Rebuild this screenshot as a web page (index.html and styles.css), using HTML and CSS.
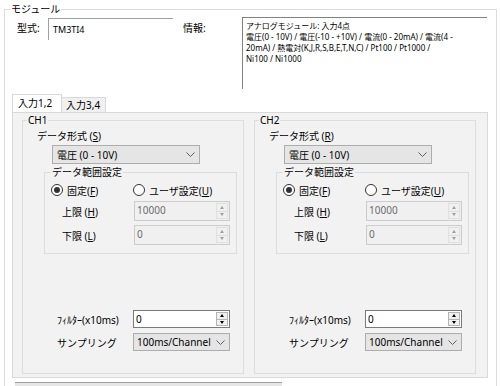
FILE: index.html
```html
<!DOCTYPE html>
<html>
<head>
<meta charset="utf-8">
<title>モジュール</title>
<link rel="stylesheet" href="styles.css">
</head>
<body>
<fieldset class="module">
    <legend>モジュール</legend>
    <div class="module-head">
        <span class="head-label type-label">型式:</span>
        <div class="type-box">TM3TI4</div>
        <span class="head-label info-label">情報:</span>
        <div class="info-box">アナログモジュール: 入力4点<br>電圧(0 - 10V) / 電圧(-10 - +10V) / 電流(0 - 20mA) / 電流(4 -<br>20mA) / 熱電対(K,J,R,S,B,E,T,N,C) / Pt100 / Pt1000 /<br>Ni100 / Ni1000</div>
    </div>

    <div class="tabs">
        <div class="tab active">入力1,2</div>
        <div class="tab">入力3,4</div>
    </div>

    <div class="tab-panel">
        <fieldset class="channel">
            <legend>CH1</legend>
            <div class="data-label">データ形式 (<u>S</u>)</div>
            <div class="combo wide">電圧 (0 - 10V)<svg class="chevron" width="9" height="5" viewBox="0 0 9 5"><polyline points="0.5,0.5 4.5,4.5 8.5,0.5" fill="none" stroke="#606060" stroke-width="1"/></svg></div>
            <fieldset class="range">
                <legend>データ範囲設定</legend>
                <div class="radio-row">
                    <span class="radio checked"></span><span class="radio-text fixed">固定(<u>F</u>)</span>
                    <span class="radio"></span><span class="radio-text">ユーザ設定(<u>U</u>)</span>
                </div>
                <div class="field-row">
                    <span class="field-label">上限 (<u>H</u>)</span>
                    <div class="spin disabled"><span class="spin-value">10000</span><span class="spin-btns"><i class="up"></i><i class="down"></i></span></div>
                </div>
                <div class="field-row">
                    <span class="field-label">下限 (<u>L</u>)</span>
                    <div class="spin disabled"><span class="spin-value">0</span><span class="spin-btns"><i class="up"></i><i class="down"></i></span></div>
                </div>
            </fieldset>
            <div class="bottom-row filter-row">
                <span class="bottom-label">ﾌｨﾙﾀｰ(x10ms)</span>
                <div class="spin"><span class="spin-value">0</span><span class="spin-btns"><i class="up"></i><i class="down"></i></span></div>
            </div>
            <div class="bottom-row">
                <span class="bottom-label">サンプリング</span>
                <div class="combo small">100ms/Channel<svg class="chevron" width="9" height="5" viewBox="0 0 9 5"><polyline points="0.5,0.5 4.5,4.5 8.5,0.5" fill="none" stroke="#606060" stroke-width="1"/></svg></div>
            </div>
        </fieldset>

        <fieldset class="channel">
            <legend>CH2</legend>
            <div class="data-label">データ形式 (<u>R</u>)</div>
            <div class="combo wide">電圧 (0 - 10V)<svg class="chevron" width="9" height="5" viewBox="0 0 9 5"><polyline points="0.5,0.5 4.5,4.5 8.5,0.5" fill="none" stroke="#606060" stroke-width="1"/></svg></div>
            <fieldset class="range">
                <legend>データ範囲設定</legend>
                <div class="radio-row">
                    <span class="radio checked"></span><span class="radio-text fixed">固定(<u>F</u>)</span>
                    <span class="radio"></span><span class="radio-text">ユーザ設定(<u>U</u>)</span>
                </div>
                <div class="field-row">
                    <span class="field-label">上限 (<u>H</u>)</span>
                    <div class="spin disabled"><span class="spin-value">10000</span><span class="spin-btns"><i class="up"></i><i class="down"></i></span></div>
                </div>
                <div class="field-row">
                    <span class="field-label">下限 (<u>L</u>)</span>
                    <div class="spin disabled"><span class="spin-value">0</span><span class="spin-btns"><i class="up"></i><i class="down"></i></span></div>
                </div>
            </fieldset>
            <div class="bottom-row filter-row">
                <span class="bottom-label">ﾌｨﾙﾀｰ(x10ms)</span>
                <div class="spin"><span class="spin-value">0</span><span class="spin-btns"><i class="up"></i><i class="down"></i></span></div>
            </div>
            <div class="bottom-row">
                <span class="bottom-label">サンプリング</span>
                <div class="combo small">100ms/Channel<svg class="chevron" width="9" height="5" viewBox="0 0 9 5"><polyline points="0.5,0.5 4.5,4.5 8.5,0.5" fill="none" stroke="#606060" stroke-width="1"/></svg></div>
            </div>
        </fieldset>
    </div>

    <div class="scroll-bar"></div>
</fieldset>
</body>
</html>
```

FILE: styles.css
```css
body {
    margin: 0;
    background-color: #fff;
    font-family: "Noto Sans", "Noto Sans CJK JP", sans-serif;
    font-size: 10px;
    color: #000;
}

fieldset {
    margin: 0;
    padding: 0;
    min-width: 0;
    border: 1px solid #dcdcdc;
}

legend {
    padding: 0 1px;
    line-height: 13px;
}

u {
    text-decoration: underline;
    text-underline-offset: 1px;
}

.module {
    margin: 3px 0 0 4px;
    width: 491px;
    height: 400px;
}

.module > legend {
    margin-left: 5px;
}

.module-head {
    display: flex;
    align-items: flex-start;
    height: 76px;
    padding: 2px 0 0 12px;
}

.head-label {
    margin-top: 4px;
    line-height: 13px;
}

.type-label {
    width: 31px;
}

.type-box {
    width: 125px;
    height: 22px;
    padding: 5px 0 0 4px;
    box-sizing: border-box;
    border-top: 1px solid #a0a0a0;
    border-left: 1px solid #a0a0a0;
    font-size: 9px;
    line-height: 11px;
}

.info-label {
    width: 59px;
    margin-left: 10px;
}

.info-box {
    width: 245px;
    height: 72px;
    margin-top: -1px;
    padding: 2px 0 0 3px;
    box-sizing: border-box;
    border-top: 1px solid #828282;
    border-left: 1px solid #828282;
    background-color: #fff;
    font-size: 8px;
    line-height: 11px;
    white-space: nowrap;
}

.tabs {
    display: flex;
    align-items: flex-end;
    height: 18px;
    margin-left: 7px;
}

.tab {
    width: 44px;
    height: 15px;
    box-sizing: border-box;
    padding-left: 4px;
    border: 1px solid #d9d9d9;
    border-bottom: none;
    border-left: none;
    background-color: #f0f0f0;
    line-height: 14px;
}

.tab.active {
    width: 50px;
    height: 18px;
    padding-left: 5px;
    border-left: 1px solid #d9d9d9;
    background-color: #fff;
    line-height: 16px;
}

.tab-panel {
    display: flex;
    gap: 10px;
    width: 476px;
    height: 266px;
    margin-left: 7px;
    padding: 1px 0 0 9px;
    box-sizing: border-box;
    border: 1px solid #d9d9d9;
    background-color: #f2f2f2;
}

.channel {
    width: 222px;
    height: 260px;
    box-sizing: border-box;
}

.channel > legend {
    margin-left: 4px;
    line-height: 12px;
}

.data-label {
    margin: 3px 0 0 14px;
    line-height: 14px;
}

.combo {
    display: flex;
    align-items: center;
    justify-content: space-between;
    box-sizing: border-box;
    border: 1px solid #adadad;
    background-color: #e5e5e5;
    padding: 0 4px 0 4px;
}

.combo.wide {
    width: 148px;
    height: 19px;
    margin: 2px 0 0 29px;
}

.combo.small {
    width: 97px;
    height: 18px;
    padding-left: 3px;
}

.range {
    width: 193px;
    height: 88px;
    margin: 2px 0 0 21px;
    box-sizing: border-box;
}

.range > legend {
    margin-left: 6px;
    line-height: 12px;
}

.radio-row {
    display: flex;
    align-items: center;
    height: 14px;
    margin: 5px 0 0 6px;
}

.radio {
    width: 12px;
    height: 12px;
    box-sizing: border-box;
    border: 1px solid #333;
    border-radius: 50%;
    background-color: #fff;
    display: flex;
    align-items: center;
    justify-content: center;
}

.radio.checked::after {
    content: "";
    width: 6px;
    height: 6px;
    border-radius: 50%;
    background-color: #333;
}

.radio-text {
    margin-left: 4px;
}

.radio-text.fixed {
    width: 66px;
}

.field-row {
    display: flex;
    align-items: center;
    margin: 4px 0 0 17px;
}

.field-label {
    width: 72px;
}

.spin {
    display: flex;
    justify-content: space-between;
    width: 96px;
    height: 20px;
    box-sizing: border-box;
    border: 1px solid #7a7a7a;
    background-color: #fff;
    padding: 1px 1px 1px 2px;
}

.spin.disabled {
    border-color: #cccccc;
    background-color: #f0f0f0;
    color: #6d6d6d;
}

.spin-value {
    line-height: 14px;
}

.spin-btns {
    display: flex;
    flex-direction: column;
    width: 12px;
    border: 1px solid #b4b4b4;
    box-sizing: border-box;
    background-color: #f0f0f0;
}

.spin.disabled .spin-btns {
    border-color: #e0e0e0;
}

.spin-btns i {
    flex: 1;
    display: flex;
    align-items: center;
    justify-content: center;
}

.spin-btns i + i {
    border-top: 1px solid #b4b4b4;
}

.spin.disabled .spin-btns i + i {
    border-top-color: #e0e0e0;
}

.spin-btns i::after {
    content: "";
    border-left: 2.5px solid transparent;
    border-right: 2.5px solid transparent;
}

.spin-btns .up::after {
    border-bottom: 3px solid #000;
}

.spin-btns .down::after {
    border-top: 3px solid #000;
}

.spin.disabled .spin-btns .up::after {
    border-bottom-color: #a0a0a0;
}

.spin.disabled .spin-btns .down::after {
    border-top-color: #a0a0a0;
}

.bottom-row {
    display: flex;
    align-items: center;
    margin: 5px 0 0 34px;
}

.filter-row {
    margin-top: 56px;
}

.filter-row .spin {
    width: 97px;
    height: 18px;
}

.bottom-label {
    width: 76px;
}

.scroll-bar {
    width: 267px;
    height: 4px;
    margin: 4px 0 0 10px;
    border-top: 1px solid #a0a0a0;
    background-color: #e6e6e6;
}
```
